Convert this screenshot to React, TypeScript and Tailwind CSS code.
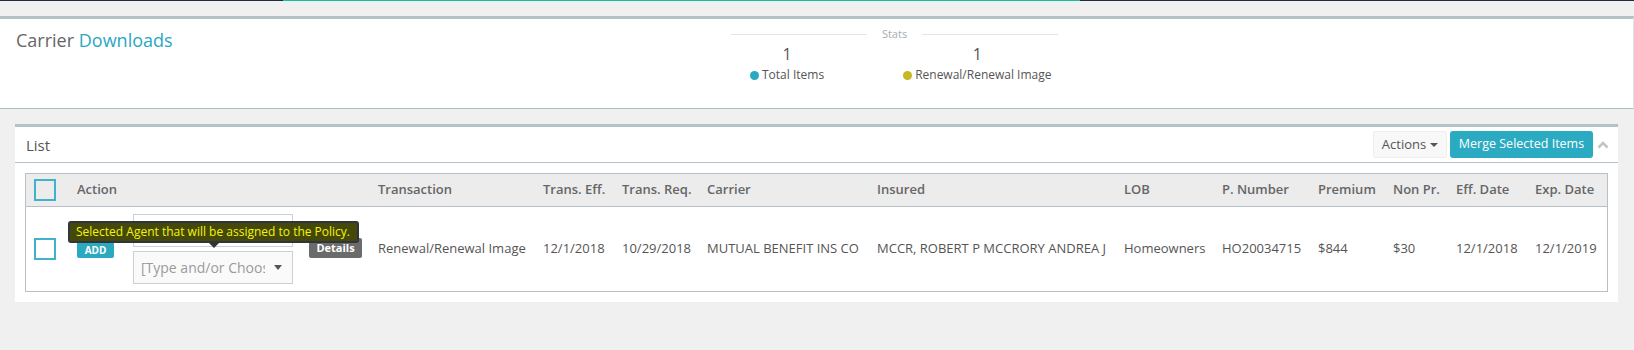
import React from "react";

const cols =
  "grid grid-cols-[43px_301px_165px_79px_85px_170px_247px_98px_96px_75px_63px_79px_1fr]";

function Checkbox({ header }: { header?: boolean }) {
  return (
    <div
      className={`h-[22px] w-[22px] border-2 border-[#41b2cc] ${
        header ? "bg-[#ececec]" : "bg-white"
      }`}
    />
  );
}

export default function App() {
  const headers = [
    "Transaction",
    "Trans. Eff.",
    "Trans. Req.",
    "Carrier",
    "Insured",
    "LOB",
    "P. Number",
    "Premium",
    "Non Pr.",
    "Eff. Date",
    "Exp. Date",
  ];
  const values = [
    "Renewal/Renewal Image",
    "12/1/2018",
    "10/29/2018",
    "MUTUAL BENEFIT INS CO",
    "MCCR, ROBERT P MCCRORY ANDREA J",
    "Homeowners",
    "HO20034715",
    "$844",
    "$30",
    "12/1/2018",
    "12/1/2019",
  ];

  return (
    <div className="min-h-screen w-full bg-[#f0f0f0] font-['Open_Sans',sans-serif] text-[#555]">
      {/* top progress line */}
      <div className="flex h-[1px]">
        <div className="w-[283px] bg-[#1e2b3a]" />
        <div className="w-[797px] bg-[#1abc9c]" />
        <div className="flex-1 bg-[#1e2b3a]" />
      </div>

      {/* page header */}
      <div className="mt-[15px] flex h-[93px] border-t-[3px] border-b border-r border-t-[#b4c1c8] border-b-[#aebbc2] border-r-[#e2e2e2] bg-white">
        <div className="w-[731px] shrink-0 pl-[16px] pt-[7px] text-[18px] leading-[28px]">
          <span className="text-[#666]">Carrier </span>
          <span className="text-[#2aa7c2]">Downloads</span>
        </div>
        <div className="w-[327px] shrink-0 pt-[8px]">
          <div className="flex h-[14px] items-center">
            <div className="h-px flex-1 bg-[#e2e6e9]" />
            <div className="px-[15px] text-[11px] leading-[14px] text-[#a3adb5]">Stats</div>
            <div className="h-px flex-1 bg-[#e2e6e9]" />
          </div>
          <div className="mt-[3px] flex">
            <div className="ml-[19px] flex flex-col items-center">
              <div className="text-[16px] leading-[20px] text-[#555]">1</div>
              <div className="mt-[3px] flex items-center text-[12px] leading-[16px] text-[#555]">
                <span className="mr-[3px] inline-block h-[9px] w-[9px] rounded-full bg-[#2aa8c0]" />
                Total Items
              </div>
            </div>
            <div className="ml-[79px] flex flex-col items-center">
              <div className="text-[16px] leading-[20px] text-[#555]">1</div>
              <div className="mt-[3px] flex items-center text-[12px] leading-[16px] text-[#555]">
                <span className="mr-[3px] inline-block h-[9px] w-[9px] rounded-full bg-[#c4b823]" />
                Renewal/Renewal Image
              </div>
            </div>
          </div>
        </div>
        <div className="flex-1" />
      </div>

      {/* list panel */}
      <div className="ml-[15px] mr-[16px] mt-[15px] border-t-[3px] border-t-[#b4c1c8] bg-white">
        <div className="flex h-[36px] items-center border-b border-b-[#b5c1c8] pl-[11px] pr-[9px]">
          <div className="text-[15px] leading-[20px] text-[#555]">List</div>
          <div className="flex-1" />
          <button className="flex h-[27px] w-[74px] items-center justify-center rounded-[2px] border border-[#eeeeee] bg-[#f8f8f8] text-[13px] text-[#555]">
            Actions
            <span className="ml-[4px] inline-block h-0 w-0 border-x-[4px] border-t-[4px] border-x-transparent border-t-[#555]" />
          </button>
          <button className="ml-[3px] flex h-[27px] w-[143px] items-center justify-center rounded-[3px] bg-[#2aabc2] text-[12.5px] text-white">
            Merge Selected Items
          </button>
          <svg
            className="ml-[4px]"
            width="12"
            height="10"
            viewBox="0 0 12 10"
            fill="none"
          >
            <polyline
              points="1.5,7.5 6,3 10.5,7.5"
              stroke="#c4c4c4"
              strokeWidth="2.6"
              strokeLinejoin="miter"
            />
          </svg>
        </div>

        <div className="px-[10px] pb-[10px] pt-[10px]">
          <div className="border border-[#b5c0c8]">
            {/* header */}
            <div
              className={`${cols} h-[33px] items-center border-b border-b-[#b5c0c8] bg-[#ececec] text-[13px] font-semibold text-[#666]`}
            >
              <div className="pl-[8px]">
                <Checkbox header />
              </div>
              <div className="pl-[8px]">Action</div>
              {headers.map((h) => (
                <div key={h} className="whitespace-nowrap pl-[8px]">
                  {h}
                </div>
              ))}
            </div>
            {/* row */}
            <div className={`${cols} h-[84px] items-center text-[13px] text-[#555]`}>
              <div className="pl-[8px]">
                <Checkbox />
              </div>
              <div className="flex items-center pl-[8px]">
                <div className="mt-[2px] flex h-[16px] w-[37px] items-center justify-center rounded-[2px] bg-[#2aa9c1] text-[10px] font-bold text-white">
                  ADD
                </div>
                <div className="ml-[19px] flex flex-col gap-[4px]">
                  <div className="h-[33px] w-[160px] border border-[#c9d1d7] bg-white" />
                  <div className="relative flex h-[33px] w-[160px] items-center border border-[#c9d1d7] bg-[#fafafa] pl-[7px]">
                    <div className="w-[124px] overflow-hidden whitespace-nowrap text-[14px] text-[#9a9a9a]">
                      [Type and/or Choose]
                    </div>
                    <span className="ml-[9px] inline-block h-0 w-0 border-x-[4px] border-t-[5px] border-x-transparent border-t-[#555]" />
                    {/* tooltip */}
                    <div className="absolute left-[-66px] top-[-31px] h-[22px] w-[291px] rounded-[3px] bg-[#2f353a] p-[2px]">
                      <div className="flex h-full items-center bg-[#45480b] px-[6px] text-[12px] leading-[16px] text-[#f4f40a]">
                        Selected Agent that will be assigned to the Policy.
                      </div>
                      <span className="absolute left-1/2 top-full h-0 w-0 -translate-x-1/2 border-x-[5px] border-t-[5px] border-x-transparent border-t-[#2f353a]" />
                    </div>
                  </div>
                </div>
                <div className="mb-[2px] ml-[16px] flex h-[20px] w-[53px] items-center justify-center rounded-[2px] bg-[#6b6b6b] text-[11px] font-bold text-white">
                  Details
                </div>
              </div>
              {values.map((v, i) => (
                <div key={i} className="whitespace-nowrap pl-[8px]">
                  {v}
                </div>
              ))}
            </div>
          </div>
        </div>
      </div>
    </div>
  );
}
